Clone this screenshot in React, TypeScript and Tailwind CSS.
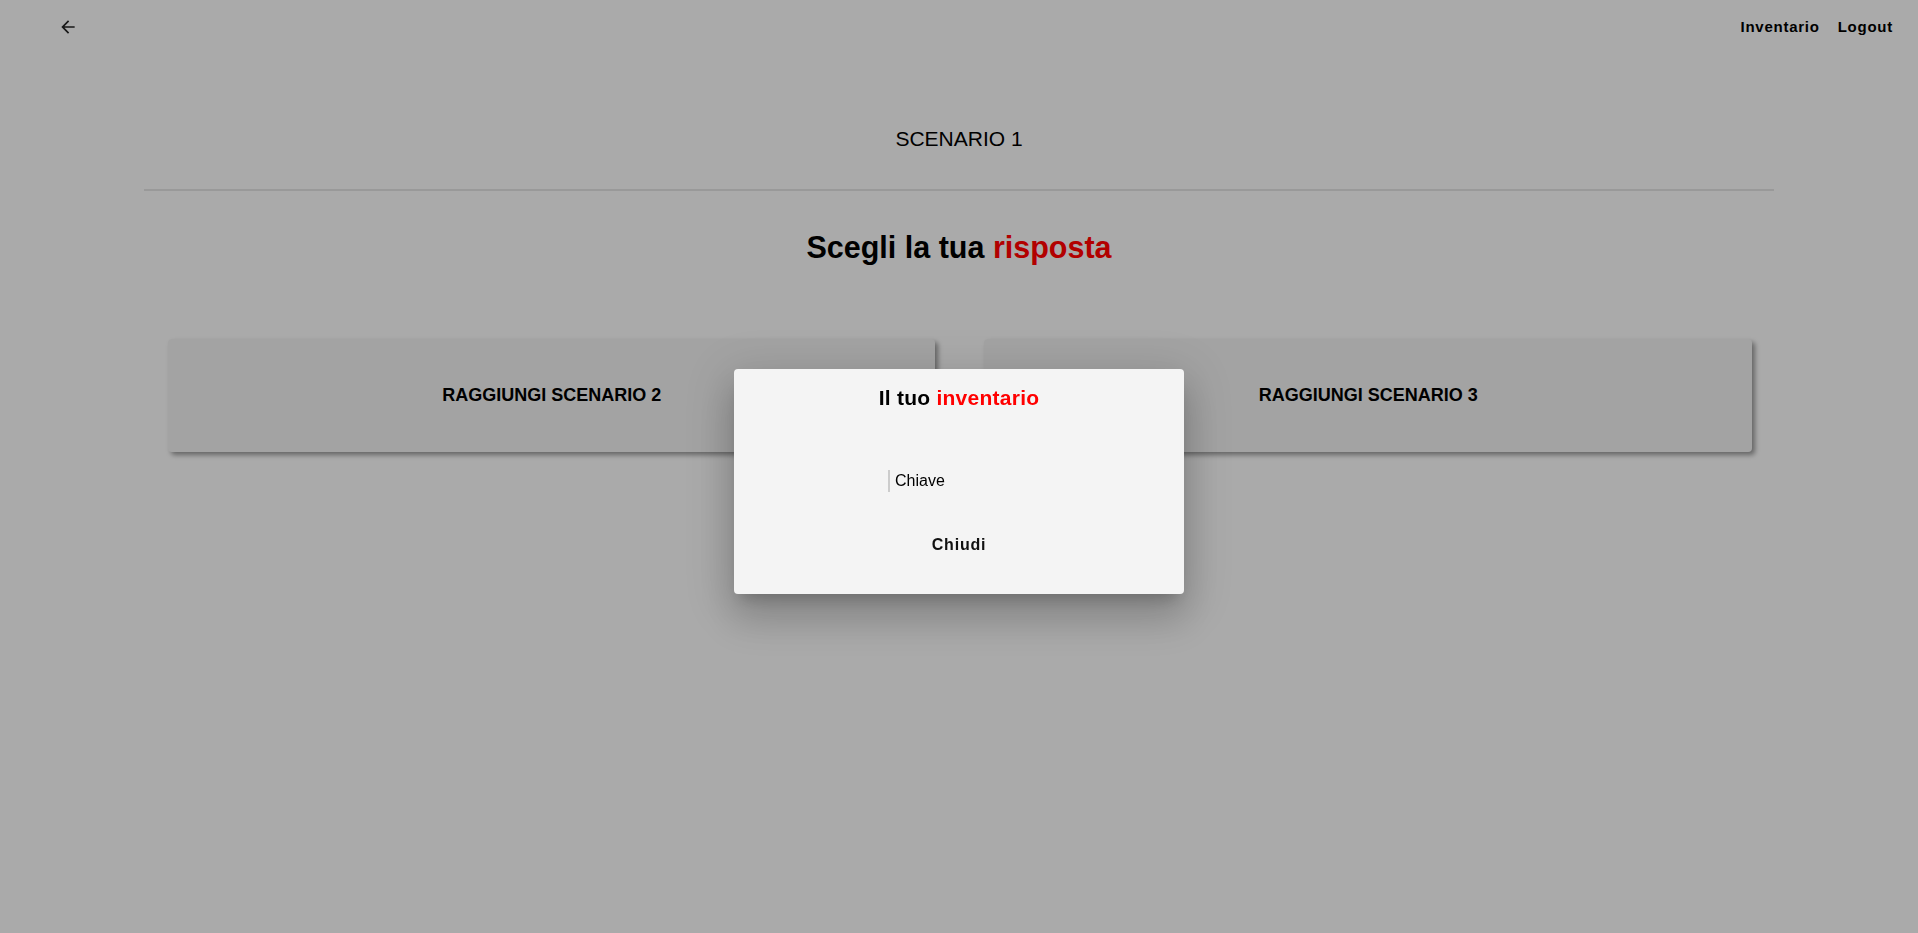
export default function App() {
  return (
    <div className="relative min-h-screen bg-[#f4f4f4] font-['Liberation_Sans',Arial,sans-serif] text-black">
      <header className="flex h-[54px] items-center justify-between pl-[58px] pr-[25px]">
        <button className="text-[#222]" aria-label="Indietro">
          <svg width="20" height="20" viewBox="0 0 24 24" fill="currentColor">
            <path d="M20 11H7.83l5.59-5.59L12 4l-8 8 8 8 1.41-1.41L7.83 13H20v-2z" />
          </svg>
        </button>
        <nav className="flex gap-[18px] text-[15px] font-bold tracking-[0.05em]">
          <span>Inventario</span>
          <span>Logout</span>
        </nav>
      </header>

      <main className="mx-auto w-[85%]">
        <h2 className="mt-[73px] text-center text-[21px] leading-[24px]">SCENARIO 1</h2>
        <hr className="mt-[38px] border-0 border-t-2 border-[#dbdbdb]" />
        <h1 className="mt-[38px] text-center text-[30.5px] font-bold leading-[36px]">
          Scegli la tua <span className="text-[#ff0000]">risposta</span>
        </h1>

        <div className="mt-[74px] grid grid-cols-2 gap-[49px] pl-6 pr-[22px]">
          {['RAGGIUNGI SCENARIO 2', 'RAGGIUNGI SCENARIO 3'].map(label => (
            <button
              key={label}
              className="flex h-[113px] items-center justify-center rounded-[4px] bg-[#eaeaea] text-[18px] font-bold shadow-[3px_3px_5px_rgba(0,0,0,0.4)]"
            >
              {label}
            </button>
          ))}
        </div>
      </main>

      {/* backdrop */}
      <div className="fixed inset-0 bg-black/30" />

      {/* dialog */}
      <div className="absolute left-1/2 top-[369px] flex h-[225px] w-[450px] -translate-x-1/2 flex-col rounded-[4px] bg-[#f4f4f4] shadow-[0_11px_15px_-7px_rgba(0,0,0,0.2),0_24px_38px_3px_rgba(0,0,0,0.14),0_9px_46px_8px_rgba(0,0,0,0.12)]">
        <h3 className="pt-[15px] text-center text-[21px] font-bold leading-[28px] tracking-[0.25px]">
          Il tuo <span className="text-[#ff0000]">inventario</span>
        </h3>
        <ul className="mt-[58px] pl-[154px]">
          <li className="border-l-2 border-[#cccccc] pl-[5px] text-[16px] leading-[22px]">Chiave</li>
        </ul>
        <div className="mt-[41px] flex justify-center">
          <button className="text-[16px] font-bold leading-[24px] tracking-[0.05em] text-[#111]">Chiudi</button>
        </div>
      </div>
    </div>
  )
}
